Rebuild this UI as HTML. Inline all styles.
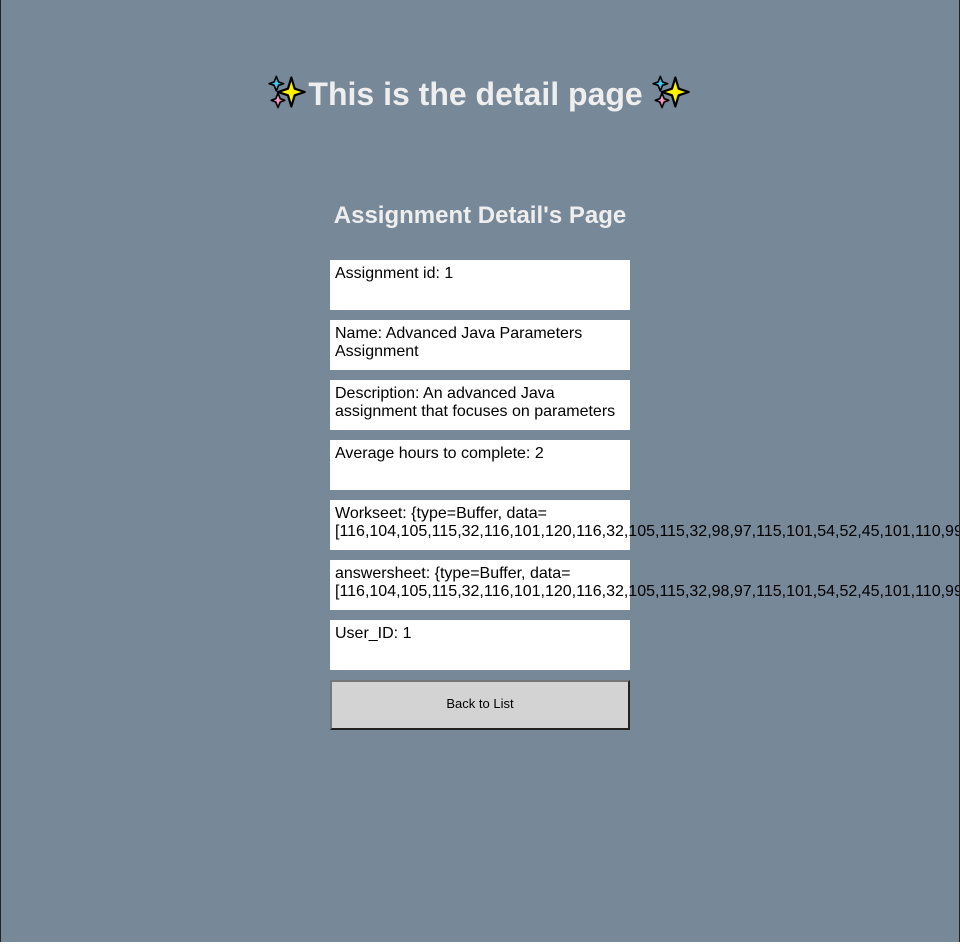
<!DOCTYPE html>
<html><head><meta charset="utf-8"><style>
html,body{margin:0;padding:0;}
body{width:960px;height:944px;overflow:hidden;background:#fff;font-family:"Liberation Sans",Arial,sans-serif;position:relative;}
.page{position:absolute;left:0;top:0;width:958px;height:942px;background:#778899;border-left:1px solid #222;border-right:1px solid #222;overflow:hidden;}
h1{position:absolute;left:0;width:958px;top:72px;margin:0;text-align:center;font-size:32px;line-height:38px;font-weight:bold;color:#eeeeee;}
h2{position:absolute;left:0;width:958px;top:202px;margin:0;text-align:center;font-size:24px;line-height:28px;font-weight:bold;color:#eeeeee;}
.box{position:absolute;left:329px;width:290px;height:40px;padding:5px;background:#fff;color:#000;font-size:16px;line-height:18px;overflow:visible;}
.btn{position:absolute;left:329px;top:680px;width:300px;height:50px;box-sizing:border-box;background:#d3d3d3;border:2px solid;border-color:#767676 #222 #222 #767676;font-size:13px;text-align:center;line-height:44px;color:#000;}
.sp{display:inline-block;vertical-align:-7px;}
</style></head><body><div class="page">
<h1><svg class="sp" width="40" height="40" viewBox="0 0 36 36"><path d="M21 5 L24 15 L33 18 L24 21 L21 31 L18 21 L9 18 L18 15 Z" fill="#fff200" stroke="#000" stroke-width="2" stroke-linejoin="round"/><path d="M7.5 4 L9.5 9 L14 10.5 L9.5 12 L7.5 17 L5.5 12 L1 10.5 L5.5 9Z" fill="#3cc8f0" stroke="#000" stroke-width="1.5" stroke-linejoin="round"/><path d="M9 19 L11 24 L15 25.5 L11 27 L9 32 L7 27 L3 25.5 L7 24Z" fill="#f49ac2" stroke="#000" stroke-width="1.5" stroke-linejoin="round"/></svg>This is the detail page <svg class="sp" width="40" height="40" viewBox="0 0 36 36"><path d="M21 5 L24 15 L33 18 L24 21 L21 31 L18 21 L9 18 L18 15 Z" fill="#fff200" stroke="#000" stroke-width="2" stroke-linejoin="round"/><path d="M7.5 4 L9.5 9 L14 10.5 L9.5 12 L7.5 17 L5.5 12 L1 10.5 L5.5 9Z" fill="#3cc8f0" stroke="#000" stroke-width="1.5" stroke-linejoin="round"/><path d="M9 19 L11 24 L15 25.5 L11 27 L9 32 L7 27 L3 25.5 L7 24Z" fill="#f49ac2" stroke="#000" stroke-width="1.5" stroke-linejoin="round"/></svg></h1>
<h2>Assignment Detail's Page</h2>
<div class="box" style="top:260px">Assignment id: 1</div>
<div class="box" style="top:320px">Name: Advanced Java Parameters Assignment</div>
<div class="box" style="top:380px">Description: An advanced Java assignment that focuses on parameters</div>
<div class="box" style="top:440px">Average hours to complete: 2</div>
<div class="box" style="top:500px">Workseet: {type=Buffer, data=<br>[116,104,105,115,32,116,101,120,116,32,105,115,32,98,97,115,101,54,52,45,101,110,99,111,100,101,100]}</div>
<div class="box" style="top:560px">answersheet: {type=Buffer, data=<br>[116,104,105,115,32,116,101,120,116,32,105,115,32,98,97,115,101,54,52,45,101,110,99,111,100,101,100]}</div>
<div class="box" style="top:620px">User_ID: 1</div>
<div class="btn">Back to List</div>
</div></body></html>
